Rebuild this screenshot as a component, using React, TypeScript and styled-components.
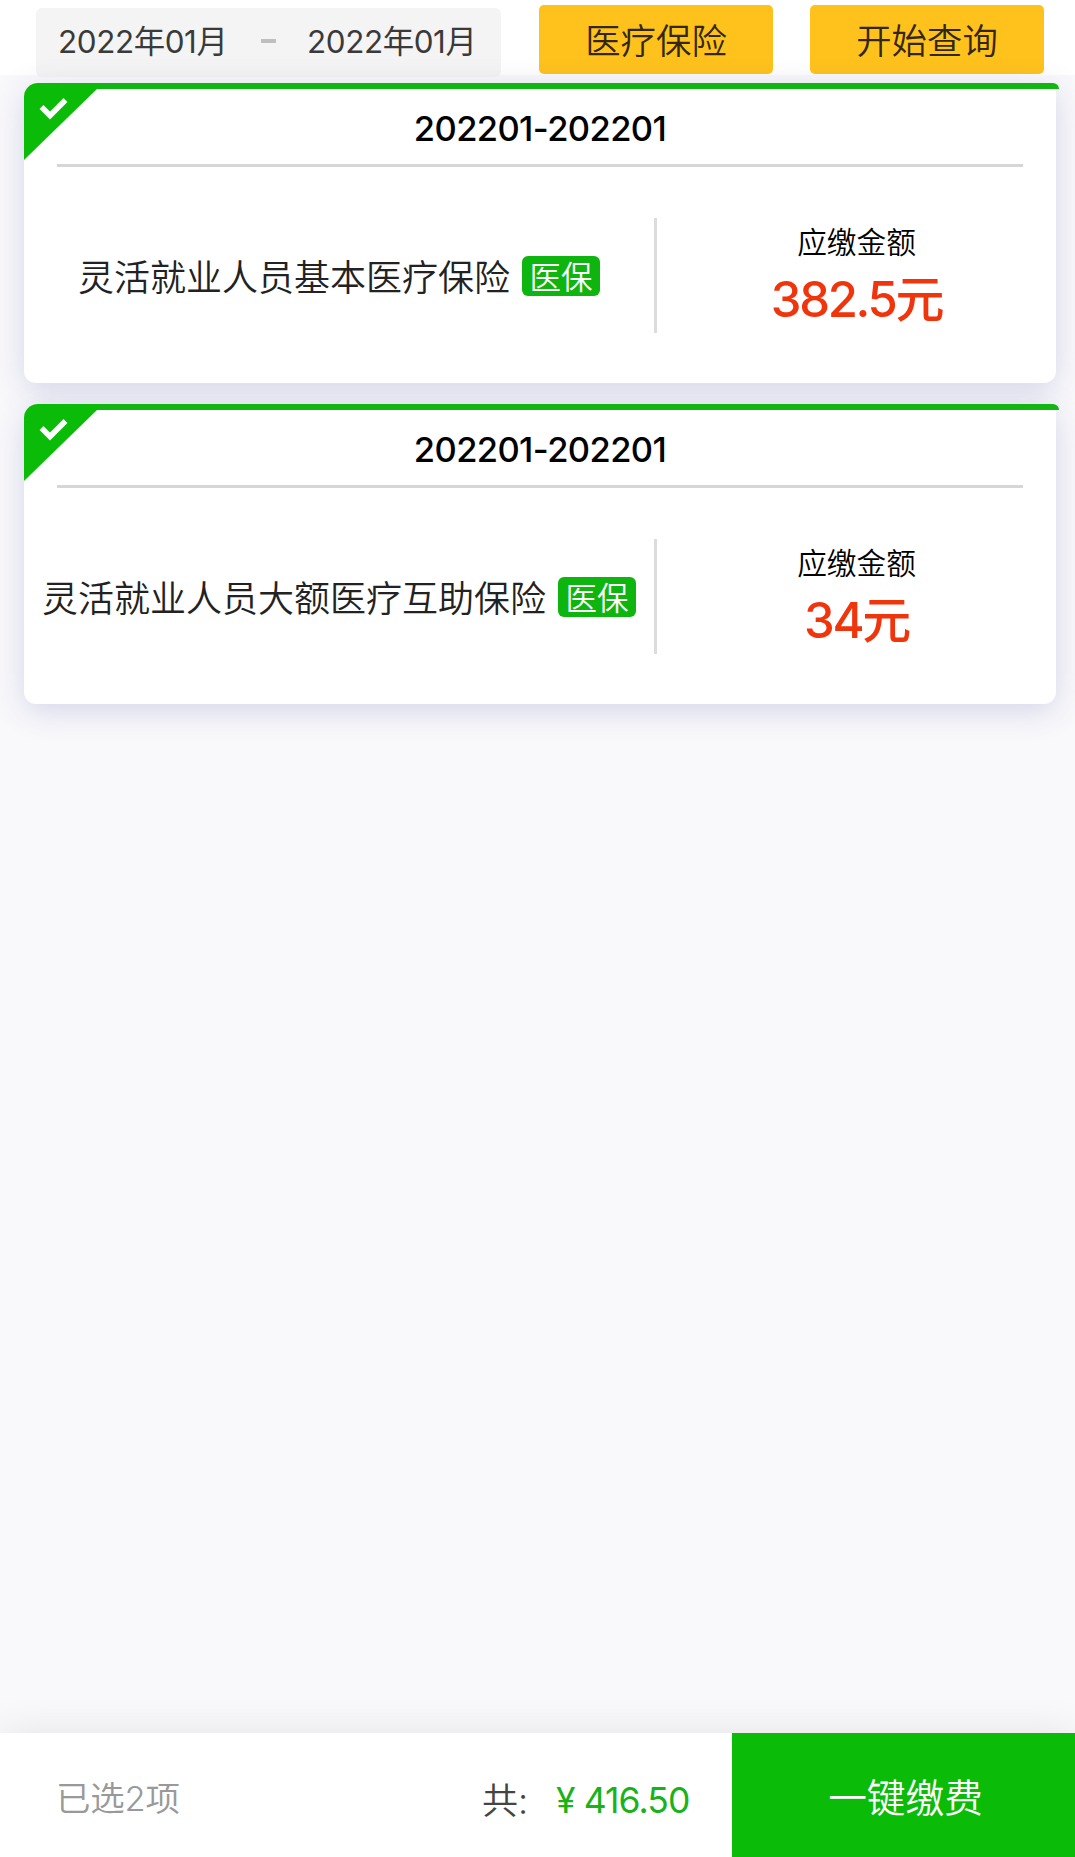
import React from 'react';
import styled, { createGlobalStyle } from 'styled-components';

const GlobalStyle = createGlobalStyle`
  * { box-sizing: border-box; }
  body {
    margin: 0;
    background: #f9f9fb;
    font-family: Inter, 'Noto Sans CJK SC', sans-serif;
  }
  button { font: inherit; border: 0; padding: 0; margin: 0; }
`;

const Page = styled.div`
  display: flex;
  flex-direction: column;
  width: 1075px;
  height: 1857px;
  overflow: hidden;
  background: #f9f9fb;
`;

const Toolbar = styled.header`
  display: flex;
  align-items: flex-start;
  height: 75px;
  padding: 5px 0 0 36px;
  background: #fff;
`;

const DateRange = styled.div`
  display: flex;
  align-items: center;
  flex: none;
  width: 465px;
  height: 69px;
  margin: 3px 38px 0 0;
  padding: 0 0 3px 22px;
  border-radius: 6px;
  background: #f4f4f4;
`;

const DateText = styled.span`
  width: 169px;
  flex: none;
  padding-top: 1px;
  font-size: 31.4px;
  line-height: 46px;
  letter-spacing: -0.4px;
  font-weight: 400;
  color: #3a3a3a;
  white-space: nowrap;
`;

const Dash = styled.span`
  width: 15px;
  height: 4px;
  flex: none;
  margin: 0 31px 0 34px;
  background: #bfbfbf;
`;

const YellowButton = styled.button`
  width: 234px;
  height: 69px;
  margin-right: 37px;
  padding-top: 5px;
  flex: none;
  border-radius: 5px;
  background: #ffc21c;
  color: #33270a;
  font-size: 35.4px;
  line-height: 64px;
  font-weight: 350;
`;

const List = styled.main`
  display: flex;
  flex-direction: column;
  gap: 21px;
  flex: 1;
  padding: 8px 19px 0 24px;
`;

const Card = styled.section`
  position: relative;
  width: 1032px;
  height: 300px;
  padding: 6px 33px 0;
  border-radius: 14px 0 12px 12px;
  background: #fff;
  box-shadow: 0 7px 32px rgba(70, 70, 160, 0.2);
`;

const TopBar = styled.div`
  position: absolute;
  top: 0;
  left: 14px;
  width: 1021px;
  height: 6px;
  border-radius: 0 6px 0 0;
  background: #12b612;
`;

const Corner = styled.svg`
  position: absolute;
  top: 0;
  left: 0;
  border-top-left-radius: 14px;
`;

const Period = styled.h2`
  height: 78px;
  margin: 0;
  padding-top: 17px;
  border-bottom: 3px solid #d6d6d6;
  text-align: center;
  font-size: 34.5px;
  line-height: 46px;
  letter-spacing: -0.6px;
  font-weight: 500;
  color: #000;
`;

const Content = styled.div`
  display: flex;
  align-items: center;
  height: 216px;
  margin: 0 -33px;
`;

const Insurance = styled.div`
  display: flex;
  align-items: center;
  justify-content: center;
  width: 630px;
  height: 100%;
  padding-top: 2px;
`;

const Name = styled.span`
  padding-top: 3px;
  font-size: 36px;
  line-height: 50px;
  font-weight: 350;
  color: #222;
  white-space: nowrap;
`;

const Tag = styled.span`
  width: 78px;
  height: 40px;
  margin-left: 12px;
  border-radius: 6px;
  background: #0fb50f;
  color: #fff;
  font-size: 31.5px;
  line-height: 43px;
  font-weight: 350;
  text-align: center;
`;

const Due = styled.div`
  display: flex;
  flex-direction: column;
  align-items: center;
  justify-content: center;
  flex: 1;
  height: 115px;
  padding-top: 5px;
  border-left: 3px solid #dcdcdc;
`;

const DueLabel = styled.span`
  font-size: 29.7px;
  line-height: 42px;
  font-weight: 350;
  color: #000;
`;

const Amount = styled.strong`
  padding-top: 2px;
  font-size: 49px;
  line-height: 70px;
  letter-spacing: -2.3px;
  font-weight: 500;
  color: #f0340c;
`;

const Footer = styled.footer`
  position: relative;
  display: flex;
  align-items: center;
  height: 124px;
  padding-left: 56px;
  background: #fff;
  box-shadow: 0 0 40px rgba(0, 0, 0, 0.09);
`;

const Selected = styled.span`
  width: 426px;
  padding-top: 7px;
  font-size: 34.5px;
  line-height: 50px;
  letter-spacing: -0.2px;
  font-weight: 350;
  color: #999;
`;

const TotalLabel = styled.span`
  width: 74px;
  padding-top: 11px;
  font-size: 36px;
  line-height: 50px;
  font-weight: 350;
  color: #444;
`;

const Total = styled.span`
  display: flex;
  gap: 9px;
  width: 176px;
  padding-top: 11px;
  font-size: 35.5px;
  line-height: 50px;
  letter-spacing: -0.9px;
  font-weight: 400;
  color: #19b319;
`;

const PayButton = styled.button`
  flex: 1;
  height: 100%;
  padding: 6px 0 0 4px;
  background: #0abb07;
  color: #fff;
  font-size: 38.7px;
  line-height: 118px;
  font-weight: 350;
`;

const items = [
  { period: '202201-202201', name: '灵活就业人员基本医疗保险', tag: '医保', amount: '382.5元' },
  { period: '202201-202201', name: '灵活就业人员大额医疗互助保险', tag: '医保', amount: '34元' },
];

function CheckedCorner() {
  return (
    <Corner width="80" height="77" viewBox="0 0 80 77">
      <path d="M0 0H79L73 6L0 77Z" fill="#0abb07" />
      <path d="M17.5 24L26 32.5L41.5 17" fill="none" stroke="#fff" strokeWidth="5.5" />
    </Corner>
  );
}

export default function App() {
  return (
    <Page>
      <GlobalStyle />
      <Toolbar>
        <DateRange>
          <DateText>2022年01月</DateText>
          <Dash />
          <DateText>2022年01月</DateText>
        </DateRange>
        <YellowButton>医疗保险</YellowButton>
        <YellowButton>开始查询</YellowButton>
      </Toolbar>
      <List>
        {items.map((item) => (
          <Card key={item.name}>
            <TopBar />
            <CheckedCorner />
            <Period>{item.period}</Period>
            <Content>
              <Insurance>
                <Name>{item.name}</Name>
                <Tag>{item.tag}</Tag>
              </Insurance>
              <Due>
                <DueLabel>应缴金额</DueLabel>
                <Amount>{item.amount}</Amount>
              </Due>
            </Content>
          </Card>
        ))}
      </List>
      <Footer>
        <Selected>已选2项</Selected>
        <TotalLabel>共:</TotalLabel>
        <Total>
          <span>¥</span>
          <span>416.50</span>
        </Total>
        <PayButton>一键缴费</PayButton>
      </Footer>
    </Page>
  );
}
